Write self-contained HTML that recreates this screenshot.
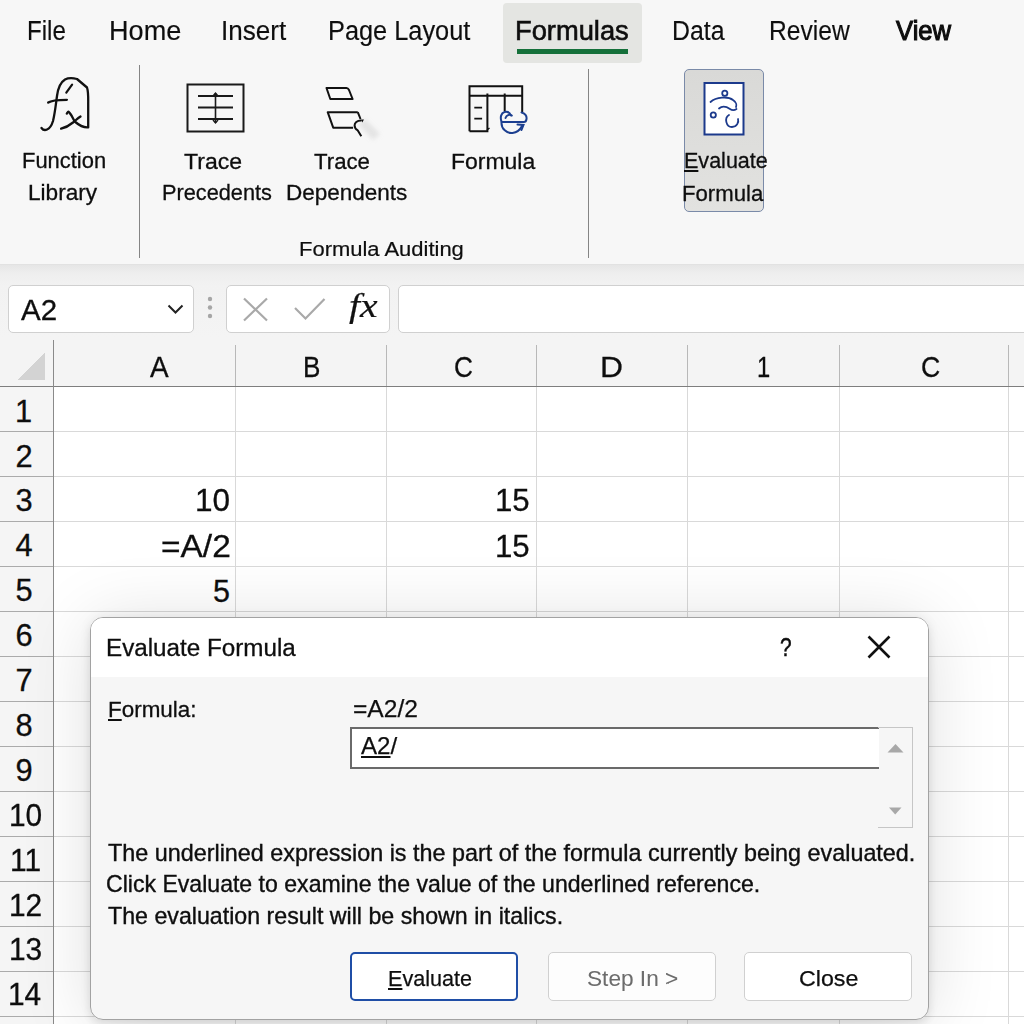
<!DOCTYPE html>
<html><head><meta charset="utf-8">
<style>
html,body{margin:0;padding:0;width:1024px;height:1024px;overflow:hidden;background:#f7f7f7;}
body{position:relative;font-family:"Liberation Sans",sans-serif;color:#141414;}
.a{position:absolute;box-sizing:border-box;}
.t{position:absolute;white-space:pre;transform-origin:0 0;font-family:"Liberation Sans",sans-serif;-webkit-text-stroke:0.5px currentColor;}
.t u{text-decoration:underline;text-decoration-thickness:1.5px;text-underline-offset:1.5px;}
svg{position:absolute;overflow:visible;}
</style></head><body>
<!-- ribbon -->
<div class="a" style="left:0;top:0;width:1024px;height:265px;background:#f7f7f7;"></div>
<div class="a" style="left:503px;top:3px;width:139px;height:60px;background:#e4e5e2;border-radius:4px;"></div>
<div class="a" style="left:517px;top:49px;width:111px;height:5px;background:#15703a;"></div>
<div class="a" style="left:139px;top:65px;width:1px;height:193px;background:#858585;"></div>
<div class="a" style="left:588px;top:69px;width:1px;height:189px;background:#858585;"></div>
<!-- evaluate formula button -->
<div class="a" style="left:684px;top:69px;width:80px;height:143px;background:linear-gradient(#d9d9d7,#e2e2e0);border:1.5px solid #7a8aa8;border-radius:5px;"></div>
<!-- ribbon bottom band -->
<div class="a" style="left:0;top:264px;width:1024px;height:1px;background:#e2e2e2;"></div>
<div class="a" style="left:0;top:265px;width:1024px;height:74px;background:linear-gradient(#e6e6e6,#eeeeee 8px,#f2f2f2 20px,#f4f4f4 74px);"></div>
<!-- name box -->
<div class="a" style="left:8px;top:285px;width:186px;height:48px;background:#fff;border:1.3px solid #d0d0d0;border-radius:5px;"></div>
<svg style="left:0;top:0" width="1024" height="400">
  <polyline points="168.5,305.5 175.5,312.5 182.5,305.5" fill="none" stroke="#222" stroke-width="2"/>
  <circle cx="210" cy="299" r="2.2" fill="#a6a6a6"/>
  <circle cx="210" cy="307.5" r="2.2" fill="#a6a6a6"/>
  <circle cx="210" cy="316" r="2.2" fill="#a6a6a6"/>
</svg>
<!-- fx box -->
<div class="a" style="left:226px;top:285px;width:164px;height:48px;background:#fff;border:1.3px solid #d0d0d0;border-radius:5px;"></div>
<svg style="left:0;top:0" width="1024" height="400">
  <path d="M244 298.5 L267 320.5 M267 298.5 L244 320.5" stroke="#a9a9a9" stroke-width="2.2" fill="none"/>
  <path d="M295 308 L305.5 318.5 L324.5 299" stroke="#a9a9a9" stroke-width="2.2" fill="none"/>
</svg>
<div class="t" style="left:349px;top:290px;font-family:'Liberation Serif',serif;font-style:italic;font-size:33px;line-height:33px;color:#111;transform:scaleX(1.2);-webkit-text-stroke:0.2px #111;">fx</div>
<!-- formula bar -->
<div class="a" style="left:398px;top:285px;width:640px;height:48px;background:#fff;border:1.3px solid #d0d0d0;border-radius:5px;"></div>
<!-- column header -->
<div class="a" style="left:0;top:339px;width:1024px;height:48px;background:#f4f4f4;"></div>
<!-- row header -->
<div class="a" style="left:0;top:386px;width:53px;height:638px;background:#f5f5f5;"></div>
<!-- cells -->
<div class="a" style="left:54px;top:387px;width:970px;height:637px;background:#fff;"></div>
<svg style="left:0;top:0" width="1024" height="1024" shape-rendering="crispEdges">
  <g stroke="#d9d9d9" stroke-width="1">
    <path d="M54 431.5H1024M54 476.5H1024M54 521.5H1024M54 566.5H1024M54 611.5H1024M54 656.5H1024M54 701.5H1024M54 746.5H1024M54 791.5H1024M54 836.5H1024M54 881.5H1024M54 926.5H1024M54 971.5H1024M54 1016.5H1024"/>
    <path d="M235.5 387V1024M386.5 387V1024M536.5 387V1024M687.5 387V1024M839.5 387V1024M1008.5 387V1024"/>
  </g>
  <g stroke="#ababab" stroke-width="1">
    <path d="M0 431.5H53M0 476.5H53M0 521.5H53M0 566.5H53M0 611.5H53M0 656.5H53M0 701.5H53M0 746.5H53M0 791.5H53M0 836.5H53M0 881.5H53M0 926.5H53M0 971.5H53M0 1016.5H53"/>
    <path d="M235.5 345V386M386.5 345V386M536.5 345V386M687.5 345V386M839.5 345V386M1008.5 345V386" stroke="#b8b8b8"/>
  </g>
  <path d="M0 386.5H1024" stroke="#7e7e7e" stroke-width="1.6"/>
  <path d="M53.5 340V1024" stroke="#8a8a8a" stroke-width="1.3"/>
  <polygon points="18,379.5 45,379.5 45,352" fill="#d3d3d3"/>
</svg>
<div class="t" style="left:27.00px;top:17.80px;font-size:26.8px;line-height:26.8px;transform:scaleX(0.9000);color:#0e0e0e;-webkit-text-stroke:0.15px #0e0e0e;">File</div>
<div class="t" style="left:108.73px;top:17.80px;font-size:26.8px;line-height:26.8px;transform:scaleX(1.0110);color:#0e0e0e;-webkit-text-stroke:0.15px #0e0e0e;">Home</div>
<div class="t" style="left:220.55px;top:17.80px;font-size:26.8px;line-height:26.8px;transform:scaleX(0.9731);color:#0e0e0e;-webkit-text-stroke:0.15px #0e0e0e;">Insert</div>
<div class="t" style="left:328.11px;top:17.80px;font-size:26.8px;line-height:26.8px;transform:scaleX(0.9459);color:#0e0e0e;-webkit-text-stroke:0.15px #0e0e0e;">Page Layout</div>
<div class="t" style="left:514.96px;top:17.80px;font-size:26.8px;line-height:26.8px;transform:scaleX(1.0183);color:#0e0e0e;-webkit-text-stroke:0.6px #0e0e0e;">Formulas</div>
<div class="t" style="left:672.15px;top:17.80px;font-size:26.8px;line-height:26.8px;transform:scaleX(0.9273);color:#0e0e0e;-webkit-text-stroke:0.15px #0e0e0e;">Data</div>
<div class="t" style="left:769.16px;top:17.80px;font-size:26.8px;line-height:26.8px;transform:scaleX(0.9186);color:#0e0e0e;-webkit-text-stroke:0.15px #0e0e0e;">Review</div>
<div class="t" style="left:895.50px;top:17.80px;font-size:26.8px;line-height:26.8px;transform:scaleX(0.9569);color:#0e0e0e;-webkit-text-stroke:1.1px #0e0e0e;">View</div>
<div class="t" style="left:22.07px;top:149.00px;font-size:22.69px;line-height:22.69px;transform:scaleX(0.9667);color:#0e0e0e;-webkit-text-stroke:0.3px #0e0e0e;">Function</div>
<div class="t" style="left:28.11px;top:180.90px;font-size:22.69px;line-height:22.69px;transform:scaleX(0.9970);color:#0e0e0e;-webkit-text-stroke:0.3px #0e0e0e;">Library</div>
<div class="t" style="left:184.00px;top:149.90px;font-size:22.69px;line-height:22.69px;transform:scaleX(1.0161);color:#0e0e0e;-webkit-text-stroke:0.3px #0e0e0e;">Trace</div>
<div class="t" style="left:162.19px;top:180.80px;font-size:22.69px;line-height:22.69px;transform:scaleX(0.9571);color:#0e0e0e;-webkit-text-stroke:0.3px #0e0e0e;">Precedents</div>
<div class="t" style="left:314.00px;top:149.50px;font-size:22.69px;line-height:22.69px;transform:scaleX(0.9786);color:#0e0e0e;-webkit-text-stroke:0.3px #0e0e0e;">Trace</div>
<div class="t" style="left:286.02px;top:180.80px;font-size:22.69px;line-height:22.69px;transform:scaleX(0.9917);color:#0e0e0e;-webkit-text-stroke:0.3px #0e0e0e;">Dependents</div>
<div class="t" style="left:450.98px;top:149.70px;font-size:22.69px;line-height:22.69px;transform:scaleX(1.0123);color:#0e0e0e;-webkit-text-stroke:0.3px #0e0e0e;">Formula</div>
<div class="t" style="left:684.30px;top:148.50px;font-size:22.69px;line-height:22.69px;transform:scaleX(0.9489);color:#0e0e0e;-webkit-text-stroke:0.3px #0e0e0e;"><u>E</u>valuate</div>
<div class="t" style="left:682.35px;top:181.70px;font-size:22.69px;line-height:22.69px;transform:scaleX(0.9765);color:#0e0e0e;-webkit-text-stroke:0.3px #0e0e0e;">Formula</div>
<div class="t" style="left:299.40px;top:238.60px;font-size:20.88px;line-height:20.88px;transform:scaleX(1.0523);color:#0e0e0e;-webkit-text-stroke:0.2px #0e0e0e;">Formula Auditing</div>
<div class="t" style="left:20.50px;top:296.00px;font-size:29.07px;line-height:29.07px;transform:scaleX(1.0147);color:#0e0e0e;-webkit-text-stroke:0.3px #0e0e0e;">A2</div>
<div class="t" style="left:150.30px;top:351.70px;font-size:30.23px;line-height:30.23px;transform:scaleX(0.9250);color:#0e0e0e;-webkit-text-stroke:0.3px #0e0e0e;">A</div>
<div class="t" style="left:303.07px;top:351.70px;font-size:30.23px;line-height:30.23px;transform:scaleX(0.8647);color:#0e0e0e;-webkit-text-stroke:0.3px #0e0e0e;">B</div>
<div class="t" style="left:454.13px;top:351.70px;font-size:30.23px;line-height:30.23px;transform:scaleX(0.8684);color:#0e0e0e;-webkit-text-stroke:0.3px #0e0e0e;">C</div>
<div class="t" style="left:599.89px;top:351.70px;font-size:30.23px;line-height:30.23px;transform:scaleX(1.0526);color:#0e0e0e;-webkit-text-stroke:0.3px #0e0e0e;">D</div>
<div class="t" style="left:756.93px;top:351.70px;font-size:30.23px;line-height:30.23px;transform:scaleX(0.7857);color:#0e0e0e;-webkit-text-stroke:0.3px #0e0e0e;">1</div>
<div class="t" style="left:920.82px;top:351.70px;font-size:30.23px;line-height:30.23px;transform:scaleX(0.8842);color:#0e0e0e;-webkit-text-stroke:0.3px #0e0e0e;">C</div>
<div class="t" style="left:194.84px;top:484.80px;font-size:30.52px;line-height:30.52px;transform:scaleX(1.0323);color:#0e0e0e;-webkit-text-stroke:0.3px #0e0e0e;">10</div>
<div class="t" style="left:160.90px;top:531.30px;font-size:30.52px;line-height:30.52px;transform:scaleX(1.0967);color:#0e0e0e;-webkit-text-stroke:0.3px #0e0e0e;">=A/2</div>
<div class="t" style="left:213.00px;top:576.00px;font-size:30.52px;line-height:30.52px;transform:scaleX(1.0000);color:#0e0e0e;-webkit-text-stroke:0.3px #0e0e0e;">5</div>
<div class="t" style="left:495.45px;top:484.80px;font-size:30.52px;line-height:30.52px;transform:scaleX(1.0226);color:#0e0e0e;-webkit-text-stroke:0.3px #0e0e0e;">15</div>
<div class="t" style="left:495.45px;top:531.00px;font-size:30.52px;line-height:30.52px;transform:scaleX(1.0226);color:#0e0e0e;-webkit-text-stroke:0.3px #0e0e0e;">15</div>
<div class="t" style="left:15.00px;top:396.60px;font-size:30.81px;line-height:30.81px;transform:scaleX(1.0000);color:#0e0e0e;-webkit-text-stroke:0.3px #0e0e0e;">1</div>
<div class="t" style="left:15.50px;top:441.50px;font-size:30.81px;line-height:30.81px;transform:scaleX(1.0000);color:#0e0e0e;-webkit-text-stroke:0.3px #0e0e0e;">2</div>
<div class="t" style="left:15.50px;top:486.40px;font-size:30.81px;line-height:30.81px;transform:scaleX(1.0000);color:#0e0e0e;-webkit-text-stroke:0.3px #0e0e0e;">3</div>
<div class="t" style="left:15.50px;top:531.30px;font-size:30.81px;line-height:30.81px;transform:scaleX(1.0000);color:#0e0e0e;-webkit-text-stroke:0.3px #0e0e0e;">4</div>
<div class="t" style="left:15.50px;top:576.20px;font-size:30.81px;line-height:30.81px;transform:scaleX(1.0000);color:#0e0e0e;-webkit-text-stroke:0.3px #0e0e0e;">5</div>
<div class="t" style="left:15.50px;top:621.10px;font-size:30.81px;line-height:30.81px;transform:scaleX(1.0000);color:#0e0e0e;-webkit-text-stroke:0.3px #0e0e0e;">6</div>
<div class="t" style="left:15.50px;top:666.00px;font-size:30.81px;line-height:30.81px;transform:scaleX(1.0000);color:#0e0e0e;-webkit-text-stroke:0.3px #0e0e0e;">7</div>
<div class="t" style="left:15.50px;top:710.90px;font-size:30.81px;line-height:30.81px;transform:scaleX(1.0000);color:#0e0e0e;-webkit-text-stroke:0.3px #0e0e0e;">8</div>
<div class="t" style="left:15.50px;top:755.80px;font-size:30.81px;line-height:30.81px;transform:scaleX(1.0000);color:#0e0e0e;-webkit-text-stroke:0.3px #0e0e0e;">9</div>
<div class="t" style="left:8.83px;top:800.70px;font-size:30.81px;line-height:30.81px;transform:scaleX(0.9700);color:#0e0e0e;-webkit-text-stroke:0.3px #0e0e0e;">10</div>
<div class="t" style="left:9.80px;top:845.60px;font-size:30.81px;line-height:30.81px;transform:scaleX(0.9700);color:#0e0e0e;-webkit-text-stroke:0.3px #0e0e0e;">11</div>
<div class="t" style="left:8.83px;top:890.50px;font-size:30.81px;line-height:30.81px;transform:scaleX(0.9700);color:#0e0e0e;-webkit-text-stroke:0.3px #0e0e0e;">12</div>
<div class="t" style="left:8.83px;top:935.40px;font-size:30.81px;line-height:30.81px;transform:scaleX(0.9700);color:#0e0e0e;-webkit-text-stroke:0.3px #0e0e0e;">13</div>
<div class="t" style="left:8.34px;top:980.30px;font-size:30.81px;line-height:30.81px;transform:scaleX(0.9700);color:#0e0e0e;-webkit-text-stroke:0.3px #0e0e0e;">14</div>
<!-- icons ribbon -->
<svg style="left:0;top:0" width="1024" height="270">
  <!-- fx function library -->
  <g fill="none" stroke="#111" stroke-width="2.3" stroke-linecap="round" stroke-linejoin="round">
    <path d="M41.5 128 C44 131.5 50 131 53 121 C55 113 56 103 57 96 C58 88 61 82 65 79.5 C68 78 73 78 77 79 L87 87.5 C88.5 92 88.2 98 88.2 104 L88.2 127.4 C85 127.8 80 126 74.7 121.5 C72.5 118 71 113.5 68.5 111.8 C68 111.5 67.5 112.5 66.8 113.6"/>
    <path d="M48.2 102.5 C52 99.8 60 99.8 66.9 99.8"/>
    <path d="M66.3 92.6 L72.1 84.6" stroke-width="2.2"/>
    <path d="M61.1 128.7 C66 127.5 70 125 73 122.5 C76 120 78 118 80.5 116.5"/>
  </g>
  <!-- trace precedents -->
  <g fill="none" stroke="#1a1a1a">
    <rect x="187.5" y="84.5" width="56" height="47" stroke-width="2"/>
    <path d="M198 96H233M198 107.5H233M198 119H233" stroke-width="1.8"/>
    <path d="M215.5 93V123" stroke-width="1.6"/>
    <path d="M213 96L215.5 93L218 96M213 120L215.5 123L218 120" stroke-width="1.4"/>
  </g>
  <!-- trace dependents -->
  <defs><filter id="bl" x="-50%" y="-50%" width="200%" height="200%"><feGaussianBlur stdDeviation="2"/></filter></defs><path d="M358 124 L365 119 L380 134 L373 140Z" fill="#d8d8d8" opacity="0.6" filter="url(#bl)"/>
  <g fill="none" stroke="#111" stroke-width="2" stroke-linejoin="round">
    <path d="M326.5 88 H346.5 C348 88 348.5 89 349 90 L352.6 99 H330.3 Z"/>
    <path d="M357.8 112.2 H327.7 L333.2 127.7 H353.1"/>
    <path d="M357.8 112.2 L360.5 119"/>
    <path d="M361 120.5 C357 120.5 354.5 123 354.6 125.5 C354.7 128 356 129.5 357.8 130.4 L361.3 136.2"/>
  </g>
  <path d="M360.5 119.5 L364 119.5 L362.3 122.5Z" fill="#111"/>
  <!-- formula icon -->
  <g fill="none" stroke="#111" stroke-width="2">
    <path d="M469.5 131.3V86.2H522.2V112"/>
    <path d="M469.5 131.3H487.4V93.5M469.5 95.7H522.2M504.7 93.5V111"/>
    <path d="M474.3 107.7H482.1M474.3 118.6H482.1" stroke-width="1.8"/>
    <path d="M487 130 L489.5 128" stroke-width="1.4"/>
  </g>
  <g fill="none" stroke="#1c3f90" stroke-width="2" stroke-linecap="round">
    <path d="M501.5 121.5 C500 117.5 501 113 504.5 112 C507.5 111.2 510 113 511 115.5"/>
    <path d="M505.5 118 C506.5 115 509.5 114 511.8 115.5"/>
    <path d="M521.5 112.5 C525 113 527 116 526.5 119 C526.2 121 525 122 524 122 H502.5"/>
    <path d="M501.5 122 C501 129 507 133.5 512.5 133 C517 132.5 520 130 522 126"/>
    <path d="M517.5 124.5 L523.5 125 L521.5 130"/>
  </g>
  <!-- evaluate formula icon -->
  <rect x="704.5" y="83" width="39" height="51.5" fill="#fff" stroke="#1c3a8c" stroke-width="2"/>
  <g fill="none" stroke="#1c3a8c" stroke-width="1.8" stroke-linecap="round">
    <circle cx="724.8" cy="93.3" r="2.6"/>
    <path d="M710.5 102 C716 97 728 96 733 100 C736 102 737 105 736 107"/>
    <path d="M719 108.5 C723 105 727 107 730 109 C733 111 735 110 736.5 109"/>
    <circle cx="713.3" cy="115" r="2.6"/>
    <path d="M729 115 C724 118 726 127 732 127 C737 127 739 122 738 119"/>
  </g>
</svg>
<!-- dialog -->
<div class="a" style="left:90px;top:617px;width:839px;height:403px;border-radius:13px;box-shadow:0 0 12px rgba(0,0,0,0.07),0 4px 70px rgba(0,0,0,0.13),0 6px 8px rgba(0,0,0,0.06);"></div>
<div class="a" style="left:90px;top:617px;width:839px;height:403px;background:#f6f6f6;border:1.5px solid #a2a2a2;border-radius:13px;overflow:hidden;">
  <div class="a" style="left:0;top:0;width:839px;height:59px;background:#fff;"></div>
</div>
<svg style="left:0;top:0" width="1024" height="1024">
  <path d="M868.5 636.5L889.5 657.5M889.5 636.5L868.5 657.5" stroke="#111" stroke-width="2.6" fill="none"/>
</svg>
<!-- text box -->
<div class="a" style="left:350px;top:727px;width:529px;height:42px;background:#fff;border-top:2px solid #6a6a6a;border-bottom:2px solid #6a6a6a;border-left:2px solid #6a6a6a;"></div>
<div class="a" style="left:878px;top:727px;width:35px;height:101px;border:1px solid #c6c6c6;border-left:none;"></div>
<svg style="left:0;top:0" width="1024" height="1024">
  <polygon points="887.5,752.5 903.5,752.5 895.5,744" fill="#a8a8a8"/>
  <polygon points="889,807.5 901.5,807.5 895.2,814.5" fill="#a8a8a8"/>
</svg>
<!-- buttons -->
<div class="a" style="left:350px;top:952px;width:168px;height:49px;background:#fff;border:2px solid #1f4ea6;border-radius:5px;"></div>
<div class="a" style="left:548px;top:952px;width:168px;height:49px;background:#fdfdfd;border:1.3px solid #d0d0d0;border-radius:5px;"></div>
<div class="a" style="left:744px;top:952px;width:168px;height:49px;background:#fff;border:1.3px solid #d0d0d0;border-radius:5px;"></div>
<div class="t" style="left:105.89px;top:636.40px;font-size:24.09px;line-height:24.09px;transform:scaleX(1.0059);color:#0e0e0e;-webkit-text-stroke:0.3px #0e0e0e;">Evaluate Formula</div>
<div class="t" style="left:779.78px;top:635.20px;font-size:25.58px;line-height:25.58px;transform:scaleX(0.8167);color:#0e0e0e;">?</div>
<div class="t" style="left:107.90px;top:698.00px;font-size:22.86px;line-height:22.86px;transform:scaleX(0.9818);color:#0e0e0e;-webkit-text-stroke:0.3px #0e0e0e;"><u>F</u>ormula:</div>
<div class="t" style="left:352.95px;top:698.25px;font-size:23.47px;line-height:23.47px;transform:scaleX(1.0483);color:#0e0e0e;-webkit-text-stroke:0.25px #0e0e0e;">=A2/2</div>
<div class="t" style="left:361.00px;top:735.20px;font-size:23.26px;line-height:23.26px;transform:scaleX(1.0371);color:#0e0e0e;-webkit-text-stroke:0.25px #0e0e0e;"><u>A2</u>/</div>
<div class="t" style="left:107.50px;top:841.70px;font-size:23.02px;line-height:23.02px;transform:scaleX(1.0145);color:#0e0e0e;-webkit-text-stroke:0.35px #0e0e0e;">The underlined expression is the part of the formula currently being evaluated.</div>
<div class="t" style="left:106.30px;top:872.80px;font-size:23.02px;line-height:23.02px;transform:scaleX(1.0026);color:#0e0e0e;-webkit-text-stroke:0.35px #0e0e0e;">Click Evaluate to examine the value of the underlined reference.</div>
<div class="t" style="left:107.50px;top:904.80px;font-size:23.02px;line-height:23.02px;transform:scaleX(1.0078);color:#0e0e0e;-webkit-text-stroke:0.35px #0e0e0e;">The evaluation result will be shown in italics.</div>
<div class="t" style="left:387.80px;top:967.60px;font-size:22.36px;line-height:22.36px;transform:scaleX(0.9651);color:#0e0e0e;-webkit-text-stroke:0.25px #0e0e0e;"><u>E</u>valuate</div>
<div class="t" style="left:586.79px;top:967.60px;font-size:22.36px;line-height:22.36px;transform:scaleX(1.0125);color:#6c6c6c;-webkit-text-stroke:0.05px #6c6c6c;">Step In &gt;</div>
<div class="t" style="left:798.56px;top:967.60px;font-size:22.36px;line-height:22.36px;transform:scaleX(1.0382);color:#0e0e0e;-webkit-text-stroke:0.25px #0e0e0e;">Close</div>
</body></html>
